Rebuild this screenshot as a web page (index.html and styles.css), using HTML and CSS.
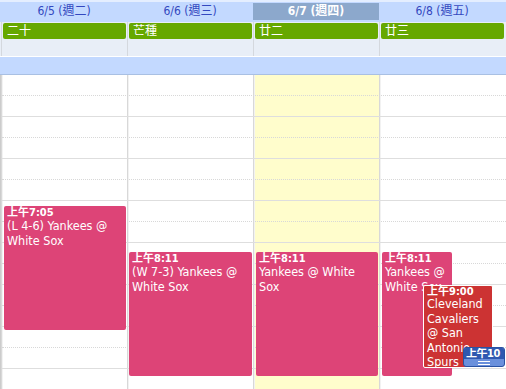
FILE: index.html
```html
<!DOCTYPE html>
<html>
    <head>
        <title>Week</title>
        <link rel="stylesheet" href="styles.css">
    </head>
    <body>
        <div class="cal">
            <div class="head">
                <div class="gut"></div>
                <div class="day">6/5 (週二)</div>
                <div class="day">6/6 (週三)</div>
                <div class="day today">6/7 (週四)</div>
                <div class="day">6/8 (週五)</div>
                <div class="gut"></div>
            </div>
            <div class="allday">
                <div class="gut"></div>
                <div class="cell"><div class="chip">二十</div></div>
                <div class="cell"><div class="chip">芒種</div></div>
                <div class="cell"><div class="chip">廿二</div></div>
                <div class="cell"><div class="chip">廿三</div></div>
                <div class="gut"></div>
            </div>
            <div class="bar"></div>
            <div class="body">
                <div class="cols">
                    <div class="gut"></div>
                    <div class="col">
                        <div class="ev" style="top:131px;height:124px;left:2px;right:1px">
                            <b>上午7:05</b>
                            <p>(L 4-6) Yankees @ White Sox</p>
                        </div>
                    </div>
                    <div class="col">
                        <div class="ev" style="top:177px;height:124px;left:1px;right:1px">
                            <b>上午8:11</b>
                            <p>(W 7-3) Yankees @ White Sox</p>
                        </div>
                    </div>
                    <div class="col now">
                        <div class="ev" style="top:177px;height:124px;left:2px;right:1px">
                            <b>上午8:11</b>
                            <p>Yankees @ White Sox</p>
                        </div>
                    </div>
                    <div class="col">
                        <div class="ev" style="top:177px;height:124px;left:2px;width:70px">
                            <b>上午8:11</b>
                            <p>Yankees @ White Sox</p>
                        </div>
                        <div class="ev red" style="top:210px;height:83px;left:43px;width:70px">
                            <b>上午9:00</b>
                            <p>Cleveland Cavaliers @ San Antonio Spurs</p>
                        </div>
                        <div class="drag" style="top:272px;left:83px">
                            <b>上午10</b>
                            <span class="grip"></span>
                        </div>
                    </div>
                    <div class="gut"></div>
                </div>
                <div class="lines">
                    <div class="hr"></div>
                    <div class="hr"></div>
                    <div class="hr"></div>
                    <div class="hr"></div>
                    <div class="hr"></div>
                    <div class="hr"></div>
                    <div class="hr"></div>
                    <div class="hr"></div>
                </div>
            </div>
        </div>
    </body>
</html>
```

FILE: styles.css
```css
html, body {
    margin: 0;
    padding: 0;
}
body {
    background: #fff;
    font-family: "DejaVu Sans Condensed", "DejaVu Sans", "Noto Sans CJK TC", sans-serif;
    font-stretch: condensed;
    font-size: 12px;
    overflow: hidden;
}
.cal {
    width: 506px;
    height: 389px;
    display: flex;
    flex-direction: column;
}
.head, .allday, .cols {
    display: grid;
    grid-template-columns: 1px repeat(4, 126px) 1px;
}
.head {
    height: 22px;
    background: #c3d9ff;
    border-top: 2px solid #e4eeff;
    box-sizing: border-box;
}
.day {
    text-align: center;
    color: #3348c0;
    font-size: 12px;
    line-height: 17px;
    height: 17px;
    margin-top: 1px;
}
.today {
    background: #8ca8cc;
    color: #fff;
    font-weight: bold;
}
.allday {
    height: 34px;
    background: #e8eef7;
}
.allday .cell {
    border-left: 1px solid #d4d8de;
    padding: 1px 1px 0 1px;
}
.chip {
    background: #66a800;
    color: #fff;
    border-radius: 2px;
    height: 16px;
    line-height: 16px;
    padding-left: 4px;
    font-size: 12px;
}
.bar {
    height: 17px;
    background: #c3d9ff;
    border-top: 1px solid #fff;
    border-bottom: 1px solid #a9c0e3;
}
.body {
    flex: 1;
    display: grid;
    overflow: hidden;
}
.cols, .lines {
    grid-area: 1 / 1;
}
.cols {
    height: 340px;
}
.cols .gut:first-child {
    border-left: 1px solid #ccc;
}
.col {
    position: relative;
    border-left: 1px solid #d8d8d8;
    box-shadow: inset 1px 0 0 #f2f2f2;
}
.now {
    background: #fffdcc;
}
.lines {
    z-index: 1;
}
.hr {
    height: 42px;
    box-sizing: border-box;
    border-bottom: 1px solid #dedede;
    position: relative;
    margin-left: 2px;
}
.hr::after {
    content: "";
    position: absolute;
    left: 0;
    right: 0;
    top: 20px;
    border-top: 1px dotted #d8d8d8;
}
.ev {
    position: absolute;
    z-index: 2;
    background: #dd4477;
    color: #fff;
    border-radius: 2px;
    padding: 1px 3px;
    box-sizing: border-box;
    overflow: hidden;
}
.ev b {
    display: block;
    font-size: 11px;
    line-height: 10px;
    padding-top: 1px;
}
.ev p {
    margin: 0;
    line-height: 15px;
    font-size: 12.5px;
}
.red {
    background: #cc3333;
    border: 1px solid #fff;
    z-index: 3;
    padding-top: 0;
    padding-right: 1px;
}
.red p {
    line-height: 14.5px;
}
.drag {
    position: absolute;
    z-index: 4;
    width: 42px;
    height: 20px;
    box-sizing: border-box;
    border: 1px solid #2952a3;
    border-radius: 3px;
    background: #6a90dc;
    overflow: hidden;
}
.drag b {
    display: block;
    background: #2f58b0;
    color: #fff;
    font-size: 11px;
    line-height: 11px;
    padding-left: 2px;
    letter-spacing: -0.5px;
}
.grip {
    display: block;
    width: 12px;
    height: 2px;
    margin: 2px auto 0;
    border-top: 1px solid #fff;
    border-bottom: 1px solid #fff;
}
```
